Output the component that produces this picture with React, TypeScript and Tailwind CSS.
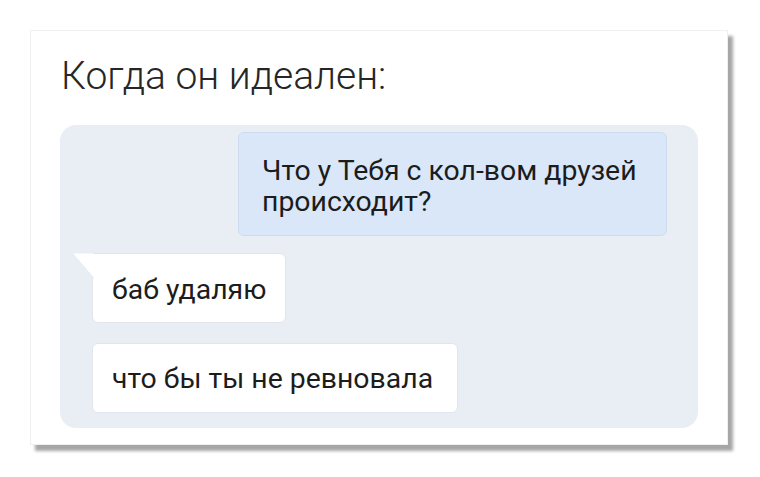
import React from 'react';

const font = { fontFamily: 'Roboto, "Liberation Sans", sans-serif' };

export default function App() {
  return (
    <div className="w-[760px] h-[477px] bg-white pt-[30px] pl-[30px]" style={font}>
      <div className="w-[698px] h-[415px] bg-white border border-[#f0f0f0] shadow-[5px_6px_3px_rgba(0,0,0,0.35)] pt-[22px] px-[29px]">
        <h1 className="text-[39px] leading-[46px] font-light text-[#262626] pl-px">Когда он идеален:</h1>
        <div className="mt-[26px] h-[303px] bg-[#e9eef5] rounded-[16px] pt-[7px] pl-[32px] pr-[31px] flex flex-col">
          <div className="self-end w-[429px] h-[104px] bg-[#d9e7f9] border border-[#cddbee] rounded-[6px] pl-[23px] pt-[22px] text-[28.4px] leading-[31px] text-[#1c1c1c]">
            Что у Тебя с кол-вом друзей<br />происходит?
          </div>
          <div className="relative mt-[17px] self-start w-[194px] h-[70px] bg-white border border-[#e2e6ec] rounded-[6px] rounded-tl-none pl-[19px] pt-[20px] text-[28.4px] leading-[31px] text-[#1c1c1c]">
            <svg className="absolute -left-[21px] -top-px" width="22" height="26" viewBox="0 0 22 26">
              <path d="M0 0.5 L21.5 0.5 L21.5 25 Z" fill="#ffffff" />
              <path d="M0.5 0.5 L21.5 25" stroke="#e2e6ec" fill="none" />
            </svg>
            баб удаляю
          </div>
          <div className="mt-[20px] self-start w-[366px] h-[70px] bg-white border border-[#e2e6ec] rounded-[6px] pl-[19px] pt-[19px] text-[28.4px] leading-[31px] text-[#1c1c1c]">
            что бы ты не ревновала
          </div>
        </div>
      </div>
    </div>
  );
}
